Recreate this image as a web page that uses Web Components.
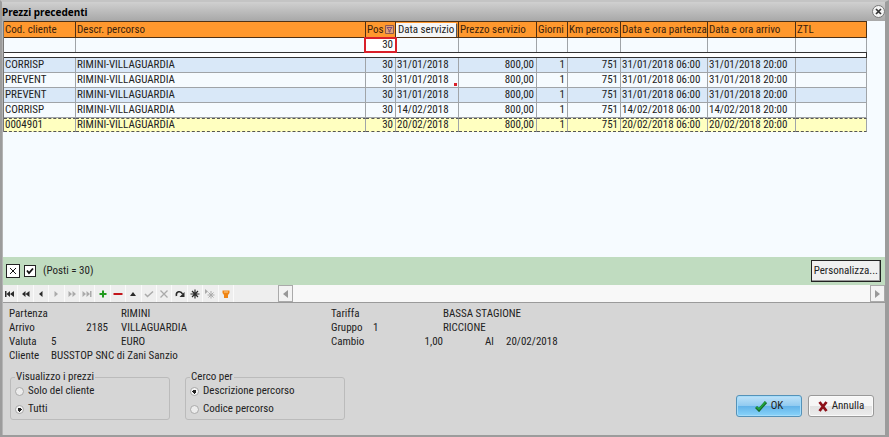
<!DOCTYPE html>
<html lang="it">
<head>
<meta charset="utf-8">
<title>Prezzi precedenti</title>
<style>
    html, body{
        margin: 0;
        height: 100%;
    }
    body{
        font: 11px/14px "Roboto Condensed", "Liberation Sans Narrow", "Arial Narrow", "Liberation Sans", sans-serif;
        color: #222;
        background: #aaa;
    }
</style>
</head>
<body>
<dialog-window caption="Prezzi precedenti">
    <price-grid></price-grid>
    <filter-bar>(Posti = 30)</filter-bar>
    <record-navigator></record-navigator>
    <price-details></price-details>
    <dialog-footer>
        <radio-box caption="Visualizzo i prezzi" name="prezzi" options="Solo del cliente|Tutti" selected="1"></radio-box>
        <radio-box caption="Cerco per" name="cerca" options="Descrizione percorso|Codice percorso" selected="0"></radio-box>
        <action-button slot="actions" primary>
            <svg slot="icon" width="12" height="11" viewBox="0 0 12 11"><path d="M1 6 4 9 11 1" fill="none" stroke="#176b2a" stroke-width="3"/><path d="M1.500 6 4 8.300 10.500 1" fill="none" stroke="#20a83c" stroke-width="1.500"/></svg>OK
        </action-button>
        <action-button slot="actions">
            <svg slot="icon" width="10" height="11" viewBox="0 0 10 11"><path d="M1.500 1 8.500 10M8.500 1 1.500 10" fill="none" stroke="#8d1018" stroke-width="2.800"/></svg>Annulla
        </action-button>
    </dialog-footer>
</dialog-window>

<script>
'use strict';

class DialogWindow extends HTMLElement {
    constructor() {
        super();
        this.attachShadow({mode: 'open'}).innerHTML = `
            <style>
                :host{
                    display: flex;
                    flex-direction: column;
                    box-sizing: border-box;
                    min-height: 100vh;
                    border: solid #9c9c9c;
                    border-width: 2px 4px 2px 2px;
                    border-top-color: #c4c4c4;
                    background: #d6d6d6;
                }
                header{
                    display: flex;
                    align-items: center;
                    justify-content: space-between;
                    height: 19px;
                    background: linear-gradient(#d0d0d0, #a8a8a8);
                }
                h1{
                    margin: 0;
                    font: bold 10px/14px "Noto Sans", sans-serif;
                    color: #000;
                }
                button{
                    width: 13px;
                    height: 13px;
                    padding: 0;
                    border: 1px solid #777;
                    border-radius: 50%;
                    background: #f4f4f4;
                    display: grid;
                    place-items: center;
                }
                main{
                    flex: 1;
                    display: flex;
                    flex-direction: column;
                    border-left: 1px solid #b4b4b4;
                }
            </style>
            <header>
                <h1></h1>
                <button aria-label="Chiudi"><svg width="7" height="7" viewBox="0 0 7 7"><path d="M1 1 6 6M6 1 1 6" stroke="#333" stroke-width="1.700"/></svg></button>
            </header>
            <main><slot></slot></main>
        `;
    }

    connectedCallback() {
        this.shadowRoot.querySelector('h1').textContent = this.getAttribute('caption');
    }
}

class PriceGrid extends HTMLElement {
    constructor() {
        super();
        this.attachShadow({mode: 'open'}).innerHTML = `
            <style>
                :host{
                    display: block;
                    flex: 1;
                    overflow: hidden;
                    background: #f6fbff;
                }
                table{
                    table-layout: fixed;
                    width: 864px;
                    border-collapse: separate;
                    border-spacing: 0;
                    border-left: 1px solid #777;
                }
                th, td{
                    box-sizing: border-box;
                    height: 15px;
                    padding: 0 2px 0 1px;
                    border: solid #a0a4a8;
                    border-width: 0 1px 1px 0;
                    font-weight: normal;
                    line-height: 14px;
                    text-align: left;
                    white-space: nowrap;
                    overflow: hidden;
                }
                th{
                    height: 17px;
                    padding: 0 0 0 1px;
                    border-color: #4e3014;
                    border-top: 1px solid #4e3014;
                    background: #ff982e;
                    color: #3a220c;
                }
                th div{
                    display: flex;
                    align-items: center;
                    gap: 1px;
                }
                th svg{
                    flex: none;
                }
                th.drag{
                    padding: 0 2px 0 0;
                }
                th.drag div{
                    padding-left: 2px;
                    background: #f6f6f6;
                    box-shadow: 1px 1px 1px #555;
                    color: #222;
                }
                .num{
                    text-align: right;
                }
                .filter td{
                    height: 14px;
                    border-bottom: 0;
                }
                .filter .num{
                    padding: 0;
                    overflow: visible;
                }
                input{
                    box-sizing: border-box;
                    display: block;
                    width: 100%;
                    height: 12px;
                    padding: 0 2px;
                    border: 0;
                    outline: 2px solid #d9202a;
                    background: #fff;
                    font: inherit;
                    color: inherit;
                    text-align: right;
                }
                .split td{
                    height: 6px;
                    padding: 0;
                    border: 1px solid #333;
                    border-left: 0;
                    background: #fff;
                    line-height: 2px;
                }
                .data:nth-child(odd) td{
                    background: #d9e8f8;
                }
                .data.current td{
                    height: 14px;
                    background: #ffffc0;
                    border-bottom: 1px dashed #555;
                    border-top: 1px dashed #555;
                    line-height: 12px;
                }
                .marked{
                    background: linear-gradient(#d9202a, #d9202a) right 1px bottom 1px / 3px 3px no-repeat;
                }
            </style>
            <table>
                <colgroup></colgroup>
                <thead><tr></tr></thead>
                <tbody class="head"></tbody>
                <tbody class="body"></tbody>
            </table>
        `;
        this.columns = [
            {label: 'Cod. cliente', width: 72},
            {label: 'Descr. percorso', width: 290},
            {label: 'Posti', width: 30, num: true, filter: '30'},
            {label: 'Data servizio', width: 63, drag: true},
            {label: 'Prezzo servizio', width: 78, num: true},
            {label: 'Giorni', width: 31, num: true},
            {label: 'Km percors', width: 53, num: true},
            {label: 'Data e ora partenza', width: 87},
            {label: 'Data e ora arrivo', width: 88},
            {label: 'ZTL', width: 71}
        ];
        this.rows = [
            ['CORRISP', '31/01/2018'],
            ['PREVENT', '31/01/2018'],
            ['PREVENT', '31/01/2018'],
            ['CORRISP', '14/02/2018'],
            ['0004901', '20/02/2018']
        ].map(([code, day]) => [code, 'RIMINI-VILLAGUARDIA', '30', day, '800,00', '1', '751', day + ' 06:00', day + ' 20:00', '']);
        this.current = 4;
    }

    connectedCallback() {
        const root = this.shadowRoot;
        const funnel = '<svg width="9" height="9" viewBox="0 0 9 9"><path d="M.5.5h8v8h-8z" fill="#dfa27a" stroke="#8c5a50"/><path d="M2 2.500h5L5 5v2H4V5z" fill="none" stroke="#7a4a78"/></svg>';
        root.querySelector('colgroup').innerHTML = this.columns.map(c => `<col style="width: ${c.width}px">`).join('');
        root.querySelector('thead tr').innerHTML = this.columns.map(c => `
            <th class="${c.drag ? 'drag' : ''}"><div><span>${c.filter ? 'Pos' : c.label}</span>${c.filter ? funnel : ''}</div></th>
        `).join('');
        root.querySelector('.head').innerHTML = `
            <tr class="filter">${this.columns.map(c => c.filter ? `<td class="num"><input aria-label="${c.label}" value="${c.filter}"></td>` : '<td></td>').join('')}</tr>
            <tr class="split"><td colspan="${this.columns.length}"></td></tr>
        `;
        root.querySelector('.body').innerHTML = this.rows.map((row, i) => `
            <tr class="data ${i === this.current ? 'current' : ''}">${row.map((v, c) => this._cell(v, i, c)).join('')}</tr>
        `).join('');
    }

    _cell(value, row, col) {
        const names = [];
        if (this.columns[col].num) names.push('num');
        if (row === 1 && col === 3) names.push('marked');
        return `<td class="${names.join(' ')}">${value}</td>`;
    }
}

class FilterBar extends HTMLElement {
    constructor() {
        super();
        this.attachShadow({mode: 'open'}).innerHTML = `
            <style>
                :host{
                    display: flex;
                    align-items: center;
                    gap: 4px;
                    height: 28px;
                    padding: 0 4px 0 3px;
                    background: #c0dcc0;
                }
                button, input{
                    box-sizing: border-box;
                    margin: 0;
                    border: 1px solid #222;
                    background: #fff;
                    color: inherit;
                    font: inherit;
                }
                .clear{
                    display: grid;
                    place-items: center;
                    width: 14px;
                    height: 14px;
                    padding: 0;
                }
                input{
                    appearance: none;
                    width: 12px;
                    height: 12px;
                }
                label{
                    display: flex;
                    align-items: center;
                    gap: 7px;
                    flex: 1;
                }
                .box{
                    display: grid;
                }
                .box > *{
                    grid-area: 1 / 1;
                    place-self: center;
                }
                .box svg{
                    pointer-events: none;
                }
                input:not(:checked) + svg{
                    visibility: hidden;
                }
                .custom{
                    height: 22px;
                    padding: 0 2px;
                    background: #f0f0f0;
                    box-shadow: inset -1px -1px #999;
                }
            </style>
            <button class="clear" aria-label="Rimuovi filtro"><svg width="8" height="8" viewBox="0 0 8 8"><path d="M1 1 7 7M7 1 1 7" stroke="#111"/></svg></button>
            <label>
                <span class="box"><input type="checkbox" checked><svg width="8" height="8" viewBox="0 0 8 8"><path d="M1 3.500 3 6 7 1.500" fill="none" stroke="#111" stroke-width="1.800"/></svg></span>
                <slot></slot>
            </label>
            <button class="custom">Personalizza...</button>
        `;
    }
}

class RecordNavigator extends HTMLElement {
    constructor() {
        super();
        this.attachShadow({mode: 'open'}).innerHTML = `
            <style>
                :host{
                    display: flex;
                    height: 17px;
                    border-bottom: 1px solid #9a9a9a;
                    background: #f8f8f8;
                }
                nav{
                    display: flex;
                    width: 231px;
                }
                nav button{
                    flex: 1;
                    padding: 0;
                    border: solid #fafafa;
                    border-width: 0 1px 0 0;
                    background: #eee;
                    color: #2a2a2a;
                }
                button{
                    display: grid;
                    place-items: center;
                }
                nav button:disabled{
                    color: #aaa;
                }
                .fill{
                    width: 44px;
                    background: #eee;
                }
                .scroll{
                    flex: 1;
                    display: flex;
                    justify-content: space-between;
                }
                .scroll button{
                    width: 15px;
                    padding: 0;
                    border: 1px solid #aaa;
                    background: #f3f3f3;
                    color: #999;
                }
                svg{
                    fill: currentColor;
                    stroke: none;
                }
            </style>
            <nav></nav>
            <div class="fill"></div>
            <div class="scroll">
                <button aria-label="Scorri a sinistra"><svg width="5" height="8" viewBox="0 0 5 8"><path d="M5 0v8L0 4z"/></svg></button>
                <button aria-label="Scorri a destra"><svg width="5" height="8" viewBox="0 0 5 8"><path d="M0 0v8L5 4z"/></svg></button>
            </div>
        `;
    }

    connectedCallback() {
        const star = '<path d="M5 .5v9M.5 5h9M2 2l6 6M8 2 2 8" fill="none" stroke="currentColor" stroke-width="1.200"/>';
        const items = [
            ['Primo', '<path d="M0 2h1.500v6H0zM5 2v6L1.500 5zM9 2v6L5 5z"/>'],
            ['Pagina precedente', '<path d="M4.500 2v6L1 5zM8.500 2v6L4.500 5z"/>'],
            ['Precedente', '<path d="M6.500 2v6L3 5z"/>'],
            ['Successivo', '<path d="M3.500 2v6L7 5z"/>', true],
            ['Pagina successiva', '<path d="M1.500 2v6L5 5zM5.500 2v6L9 5z"/>', true],
            ['Ultimo', '<path d="M.5 2v6L4 5zM4.500 2v6L8 5zM8 2h1.500v6H8z"/>', true],
            ['Inserisci', '<path d="M4 1.500h2V4h2.500v2H6v2.500H4V6H1.500V4H4z" fill="#20991d"/>'],
            ['Elimina', '<path d="M.5 4h9v2h-9z" fill="#c3161c"/>'],
            ['Modifica', '<path d="M2 7h6L5 3z"/>'],
            ['Conferma', '<path d="M1 5 3.500 7.500 9 2.500" fill="none" stroke="currentColor" stroke-width="1.500"/>', true],
            ['Annulla modifica', '<path d="M1.500 1.500l7 7M8.500 1.500l-7 7" fill="none" stroke="currentColor" stroke-width="1.300"/>', true],
            ['Aggiorna', '<path d="M1.500 7C.5 2 6 1.500 7.500 5" fill="none" stroke="currentColor" stroke-width="1.600"/><path d="M9.500 3v5h-5z"/>'],
            ['Salva segnalibro', star],
            ['Vai al segnalibro', '<path d="M0 0v5l3-2.500z"/><path d="M6 2v7.500M2.500 6h7M3.500 3.500l5 5M8.500 3.500l-5 5" fill="none" stroke="currentColor"/>', true],
            ['Filtro', '<path d="M1.500 1.500h7v2.500L7 6V9H3V6L1.500 4z" fill="#ef8414"/><path d="M3 3h4" stroke="#ffd08a"/>']
        ];
        this.shadowRoot.querySelector('nav').innerHTML = items.map(([label, icon, off]) => `
            <button aria-label="${label}" ${off ? 'disabled' : ''}><svg width="10" height="10" viewBox="0 0 10 10">${icon}</svg></button>
        `).join('');
    }
}

class PriceDetails extends HTMLElement {
    constructor() {
        super();
        this.attachShadow({mode: 'open'}).innerHTML = `
            <style>
                :host{
                    display: grid;
                    grid-template-columns: 42px 57px 223px 42px 70px 42px 21px 1fr;
                    grid-auto-rows: 14px;
                    padding: 4px 0 0 6px;
                }
                .row{
                    display: contents;
                }
                .num{
                    text-align: right;
                }
                .name{
                    padding-left: 13px;
                }
                .wide{
                    grid-column: span 3;
                }
            </style>
            <div class="row"><span>Partenza</span><span></span><span class="name">RIMINI</span><span>Tariffa</span><span></span><span class="wide">BASSA STAGIONE</span></div>
            <div class="row"><span>Arrivo</span><span class="num">2185</span><span class="name">VILLAGUARDIA</span><span>Gruppo</span><span>1</span><span class="wide">RICCIONE</span></div>
            <div class="row"><span>Valuta</span><span>5</span><span class="name">EURO</span><span>Cambio</span><span class="num">1,00</span><span></span><span>Al</span><span>20/02/2018</span></div>
            <div class="row"><span>Cliente</span><span class="wide">BUSSTOP SNC di Zani Sanzio</span></div>
        `;
    }
}

class DialogFooter extends HTMLElement {
    constructor() {
        super();
        this.attachShadow({mode: 'open'}).innerHTML = `
            <style>
                :host{
                    display: flex;
                    justify-content: space-between;
                    align-items: flex-end;
                    padding: 7px 11px 15px 7px;
                }
                div{
                    display: flex;
                    gap: 15px;
                }
                .actions{
                    gap: 6px;
                    padding-bottom: 3px;
                }
            </style>
            <div><slot></slot></div>
            <div class="actions"><slot name="actions"></slot></div>
        `;
    }
}

class RadioBox extends HTMLElement {
    constructor() {
        super();
        this.attachShadow({mode: 'open'}).innerHTML = `
            <style>
                :host{
                    display: block;
                    width: 160px;
                }
                fieldset{
                    display: grid;
                    gap: 4px;
                    margin: 0;
                    padding: 0 4px 3px 4px;
                    border: 1px solid #bbb;
                    border-radius: 3px;
                }
                legend{
                    padding: 0 1px;
                }
                label{
                    display: flex;
                    align-items: center;
                    gap: 4px;
                }
                input{
                    appearance: none;
                    box-sizing: border-box;
                    width: 9px;
                    height: 9px;
                    margin: 0;
                    border: 1px solid #aaa;
                    border-radius: 50%;
                    background: #ececec;
                }
                input:checked{
                    background: radial-gradient(#222 0 2px, #f4f4f4 2px);
                }
            </style>
            <fieldset><legend></legend></fieldset>
        `;
    }

    connectedCallback() {
        const selected = Number(this.getAttribute('selected'));
        this.shadowRoot.querySelector('legend').textContent = this.getAttribute('caption');
        this.shadowRoot.querySelector('fieldset').insertAdjacentHTML('beforeend', this.getAttribute('options').split('|').map((text, i) => `
            <label><input type="radio" name="${this.getAttribute('name')}" ${i === selected ? 'checked' : ''}>${text}</label>
        `).join(''));
    }
}

class ActionButton extends HTMLElement {
    constructor() {
        super();
        this.attachShadow({mode: 'open'}).innerHTML = `
            <style>
                :host{
                    display: block;
                }
                button{
                    display: flex;
                    align-items: center;
                    justify-content: center;
                    gap: 4px;
                    width: 66px;
                    height: 22px;
                    padding: 0;
                    border: 1px solid #999;
                    border-radius: 3px;
                    background: linear-gradient(#f6f6f6 50%, #e2e2e2 50%, #ececec);
                    box-shadow: inset 0 0 0 1px #fafafa;
                    font: inherit;
                    color: inherit;
                }
                :host([primary]) button{
                    border-color: #5592b8;
                    background: linear-gradient(#bfe2f8, #90caf0 50%, #62b2e8 50%, #8ad4fa);
                    box-shadow: inset 0 0 0 1px #a5dcfa;
                }
            </style>
            <button><slot name="icon"></slot><span><slot></slot></span></button>
        `;
    }
}

customElements.define('dialog-window', DialogWindow);
customElements.define('price-grid', PriceGrid);
customElements.define('filter-bar', FilterBar);
customElements.define('record-navigator', RecordNavigator);
customElements.define('price-details', PriceDetails);
customElements.define('dialog-footer', DialogFooter);
customElements.define('radio-box', RadioBox);
customElements.define('action-button', ActionButton);
</script>
</body>
</html>
